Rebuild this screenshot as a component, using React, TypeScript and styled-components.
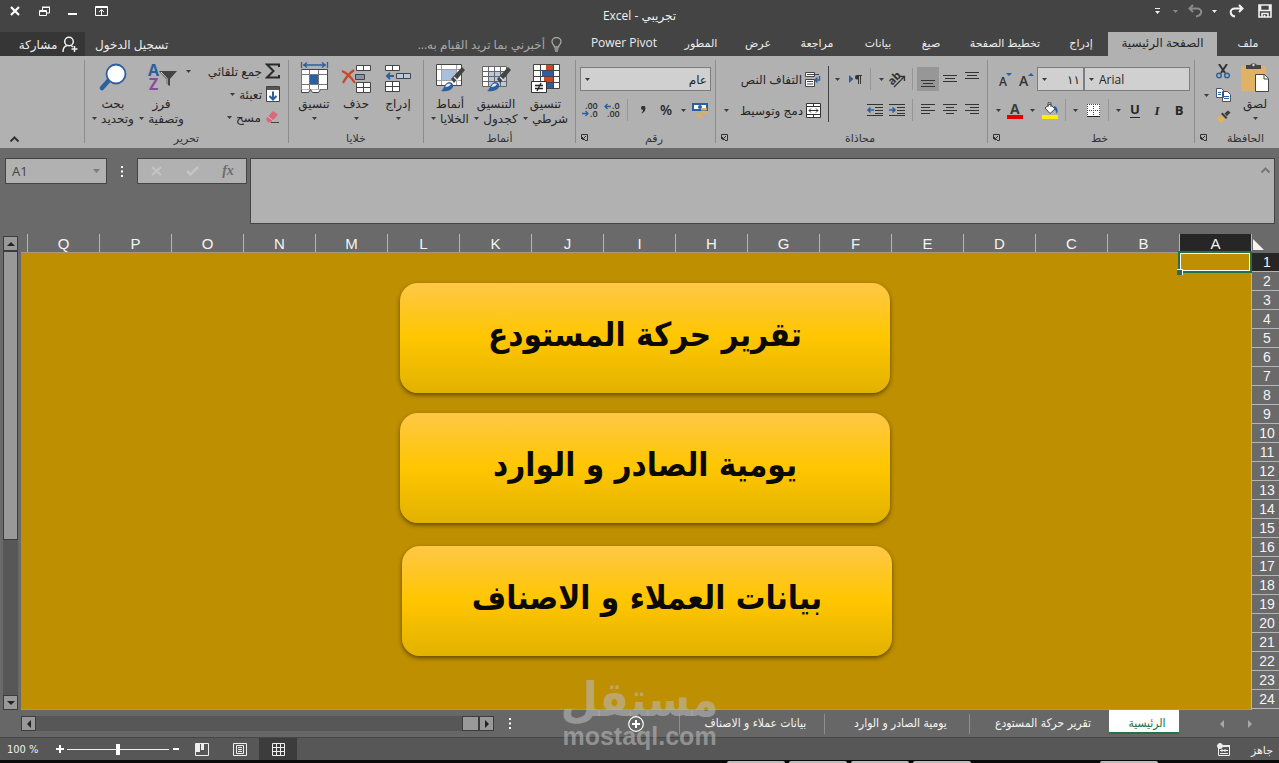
import React from "react";
import styled, { createGlobalStyle, css } from "styled-components";

const ui = `"Open Sans", "DejaVu Sans", sans-serif`;
const condensed = `"DejaVu Sans Condensed", "DejaVu Sans", sans-serif`;
const sheet = `"Liberation Sans", "DejaVu Sans", sans-serif`;

const c = {
  dark: "#444444",
  darker: "#363636",
  ribbon: "#b1b1b1",
  frame: "#6a6a6a",
  status: "#575757",
  ink: "#262626",
  blue: "#2b5f9e",
  gold: "#be8f00",
  green: "#217346",
  field: "#d0d0d0",
};

const GlobalStyle = createGlobalStyle`
  * { box-sizing: border-box; }
  body { margin: 0; background: ${c.frame}; }
  button, input, select, textarea { font: inherit; color: inherit; border: 0; padding: 0; margin: 0; background: none; border-radius: 0; outline: none; }
  svg { display: block; flex: none; direction: ltr; }
`;

const Window = styled.div`
  position: relative;
  display: flex;
  flex-direction: column;
  min-height: 100vh;
  overflow: hidden;
  font: 12px/15px ${ui};
  color: ${c.ink};
`;

/* ---------- title bar and tabs ---------- */

const TitleBar = styled.header`
  display: grid;
  grid-template-columns: 1fr auto 1fr;
  height: 32px;
  background: ${c.dark};
  color: #f0f0f0;
`;
const Title = styled.h1`
  margin: 0;
  font: 400 12px/32px ${ui};
`;
const QuickAccess = styled.div`
  display: flex;
  align-items: center;
  height: 22px;
  padding-right: 2px;
`;
const WindowControls = styled.div`
  display: flex;
  direction: ltr;
  align-items: center;
  height: 22px;
`;
const Slot = styled.button<{ $w?: number; $h?: number; $on?: boolean }>`
  display: flex;
  flex: none;
  align-items: center;
  justify-content: center;
  width: ${(p) => p.$w ?? 22}px;
  height: ${(p) => p.$h ?? 22}px;
  background: ${(p) => (p.$on ? "#979797" : "none")};
`;
const TabRow = styled.nav`
  display: flex;
  height: 24px;
  background: ${c.dark};
  color: #ececec;
`;
const Tab = styled.button<{ $w: number; $active?: boolean }>`
  flex: none;
  width: ${(p) => p.$w}px;
  padding-bottom: 3px;
  font-size: ${(p) => (p.dir === "ltr" || p.$active ? 12 : 11)}px;
  white-space: nowrap;
  ${(p) => p.$active && css`background: ${c.ribbon}; color: ${c.ink};`}
`;
const TellMe = styled.button`
  display: flex;
  align-items: center;
  gap: 6px;
  padding-right: 16px;
  color: #a8a8a8;
`;
const SignIn = styled.button`
  margin-right: auto;
  padding-left: 10px;
`;
const Share = styled.button`
  display: flex;
  align-items: center;
  justify-content: center;
  gap: 5px;
  width: 85px;
  padding-left: 12px;
  background: ${c.darker};
`;

/* ---------- ribbon ---------- */

const Ribbon = styled.section`
  display: flex;
  height: 92px;
  background: ${c.ribbon};
`;
const Group = styled.div<{ $w: number }>`
  display: flex;
  flex: none;
  flex-direction: column;
  width: ${(p) => p.$w}px;
  background: linear-gradient(#8c8c8c, #8c8c8c) left 4px / 1px 83px no-repeat;
  padding-left: 1px;
`;
const GroupBody = styled.div`
  display: flex;
  flex: 1;
  padding: 4px 4px 0;
`;
const GroupFoot = styled.div`
  display: flex;
  align-items: center;
  height: 18px;
  padding-bottom: 3px;
  color: #333;
  font-size: 11px;
`;
const GroupName = styled.span`
  flex: 1;
  text-align: center;
`;
const RibbonEnd = styled.div`
  display: flex;
  flex: 1;
  align-items: flex-end;
  justify-content: flex-end;
  padding: 0 0 0 4px;
`;
const BigButton = styled.button<{ $w: number }>`
  display: flex;
  flex: none;
  flex-direction: column;
  align-items: center;
  width: ${(p) => p.$w}px;
  height: 70px;
  white-space: nowrap;
`;
const BigIcon = styled.span`
  display: flex;
  align-items: center;
  height: 36px;
`;
const Line = styled.span`
  display: flex;
  align-items: center;
  gap: 4px;
  height: 15px;
`;
const Rows = styled.div`
  display: flex;
  flex-direction: column;
  padding-top: 7px;
  gap: 7px;
`;
const SmallStack = styled.div<{ $w?: number }>`
  display: flex;
  flex: none;
  flex-direction: column;
  gap: 1px;
  width: ${(p) => (p.$w ? p.$w + "px" : "auto")};
`;
const EditingStack = styled(SmallStack)`
  margin-right: 4px;
`;
const Row = styled.div`
  display: flex;
  align-items: center;
  height: 24px;
`;
const Small = styled.button<{ $gap?: number }>`
  display: flex;
  align-items: center;
  gap: ${(p) => p.$gap ?? 4}px;
  height: 22px;
  white-space: nowrap;
`;
const Sep = styled.span<{ $w: number }>`
  flex: none;
  width: ${(p) => p.$w}px;
  height: 22px;
  background: linear-gradient(#969696, #969696) center / 1px 100% no-repeat;
`;
const DarkSep = styled.span`
  flex: none;
  width: 1px;
  height: 56px;
  margin-top: 6px;
  background: #444;
`;
const WrapBlock = styled.div`
  display: flex;
  flex: 1;
  flex-direction: column;
  gap: 7px;
  padding: 7px 7px 0 4px;
`;
const WideSmall = styled.button`
  display: flex;
  align-items: center;
  gap: 3px;
  height: 24px;
  white-space: nowrap;
`;
const PushEnd = styled.span`
  margin-right: auto;
`;
const SelectBox = styled.label<{ $w: number }>`
  position: relative;
  display: flex;
  width: ${(p) => p.$w}px;
  height: 24px;
  border: 1px solid #7d7d7d;
  background: ${c.field};
`;
const Picker = styled.select<{ $ltr?: boolean }>`
  width: 100%;
  padding: ${(p) => (p.$ltr ? "0 0 0 14px" : "0 3px 0 14px")};
  appearance: none;
  direction: ${(p) => (p.$ltr ? "ltr" : "rtl")};
`;
const PickerArrow = styled.span`
  position: absolute;
  left: 4px;
  top: 10px;
  pointer-events: none;
`;
const Glyph = styled.span<{ $italic?: boolean; $under?: boolean }>`
  font: ${(p) => (p.$italic ? "italic" : "normal")} 700 13px/15px ${(p) => (p.$italic ? `"Liberation Serif", serif` : ui)};
  border-bottom: ${(p) => (p.$under ? `1px solid ${c.ink}` : "0")};
`;
const Percent = styled.span`
  font: 600 14px/20px ${ui};
`;

/* ---------- formula bar ---------- */

const FormulaArea = styled.section`
  display: flex;
  direction: ltr;
  align-items: flex-start;
  height: 86px;
  padding: 10px 4px 0 5px;
  background: ${c.frame};
`;
const NameBox = styled.div`
  display: flex;
  align-items: center;
  width: 102px;
  height: 26px;
  padding: 0 6px;
  border: 1px solid #444;
  background: ${c.ribbon};
  color: #444;
`;
const NameInput = styled.input`
  flex: 1;
  min-width: 0;
  font-size: 13px;
`;
const DotsWrap = styled.div<{ $w: number }>`
  display: flex;
  align-items: center;
  justify-content: center;
  width: ${(p) => p.$w}px;
  height: 26px;
`;
const FxBox = styled.div`
  display: flex;
  align-items: center;
  width: 110px;
  height: 26px;
  border: 1px solid #444;
  background: ${c.ribbon};
`;
const Fx = styled.span`
  font: italic 700 14px/20px "Liberation Serif", serif;
  color: #6d6d6d;
`;
const FormulaBox = styled.div`
  display: flex;
  flex: 1;
  align-items: flex-start;
  height: 66px;
  margin-left: 3px;
  border: 1px solid #444;
  background: ${c.ribbon};
`;
const FormulaInput = styled.textarea`
  flex: 1;
  height: 100%;
  resize: none;
`;

/* ---------- worksheet ---------- */

const Sheet = styled.main`
  display: flex;
  flex: 1;
  background: ${c.frame};
  font-family: ${sheet};
`;
const RowHeads = styled.div`
  flex: none;
  width: 28px;
  border-left: 1px solid #b5b5b5;
`;
const Corner = styled.div`
  display: flex;
  align-items: center;
  justify-content: flex-end;
  height: 19px;
  padding: 0 3px 0 0;
`;
const RowHead = styled.div<{ $active?: boolean }>`
  height: 19px;
  padding-left: 3px;
  border-bottom: 1px solid #b5b5b5;
  background: ${(p) => (p.$active ? "#262626" : "none")};
  color: #f4f4f4;
  font-size: 14px;
  line-height: 19px;
  direction: ltr;
  text-align: center;
`;
const Grid = styled.div`
  display: flex;
  flex: 1;
  flex-direction: column;
  min-width: 0;
`;
const ColHeads = styled.div`
  display: flex;
  height: 19px;
  overflow: hidden;
  border-bottom: 1px solid #a19a80;
`;
const ColHead = styled.div<{ $active?: boolean }>`
  flex: none;
  width: 72px;
  border-left: 1px solid #b5b5b5;
  background: ${(p) => (p.$active ? "#262626" : "none")};
  color: #f4f4f4;
  font-size: 15px;
  line-height: 19px;
  text-align: center;
`;
const Canvas = styled.div`
  position: relative;
  flex: 1;
  border-bottom: 1px solid #a19a80;
  background: ${c.gold};
`;
const SelectedCell = styled.div`
  position: absolute;
  top: -2px;
  right: -1px;
  width: 74px;
  height: 22px;
  border: 2px solid ${c.green};
  box-shadow: inset 0 0 0 1px #fff;
`;
const FillHandle = styled.span`
  position: absolute;
  left: -3px;
  bottom: -4px;
  width: 6px;
  height: 6px;
  border: 1px solid #fff;
  border-width: 1px 1px 0 0;
  background: ${c.green};
`;
const Shape = styled.button<{ $top: number; $right: number }>`
  position: absolute;
  top: ${(p) => p.$top}px;
  right: ${(p) => p.$right}px;
  width: 490px;
  height: 110px;
  padding-bottom: 6px;
  border-radius: 18px;
  background: linear-gradient(#ffc746, #ffc600 50%, #e2b200);
  box-shadow: 0 2px 4px rgba(60, 40, 0, 0.7);
  color: #0c0a06;
  font: 700 33px/40px ${condensed};
`;
const VScroll = styled.div`
  display: flex;
  flex: none;
  flex-direction: column;
  width: 21px;
  padding: 2px 3px 0;
`;
const ScrollButton = styled.button`
  display: flex;
  flex: none;
  align-items: center;
  justify-content: center;
  width: 15px;
  height: 15px;
  border: 1px solid #3c3c3c;
  background: #999;
`;
const VTrack = styled.div`
  flex: 1;
  background: #575757;
`;
const VThumb = styled.div`
  height: 65%;
  border: 1px solid #3c3c3c;
  background: #999;
`;

/* ---------- sheet tabs and status bar ---------- */

const SheetBar = styled.nav`
  display: flex;
  height: 28px;
  background: #676767;
  border-bottom: 1px solid #464646;
`;
const SheetNav = styled.div`
  display: flex;
  align-items: center;
  justify-content: center;
  width: 100px;
  padding-left: 14px;
  height: 27px;
`;
const SheetTab = styled.button<{ $w: number; $active?: boolean }>`
  flex: none;
  width: ${(p) => p.$w}px;
  height: 27px;
  padding-left: 8px;
  color: #f4f4f4;
  font: 12px/15px ${condensed};
  white-space: nowrap;
  background: linear-gradient(#8f8f8f, #8f8f8f) left 4px / 1px 20px no-repeat;
  ${(p) =>
    p.$active &&
    css`
      height: 24px;
      padding: 4px 0 0 6px;
      background: #fff;
      color: ${c.green};
      border-bottom: 2px solid ${c.green};
    `}
`;
const Spacer = styled.span`
  flex: 1;
`;
const HScroll = styled.div`
  display: flex;
  direction: ltr;
  align-items: center;
  width: 37%;
  height: 27px;
`;
const HTrack = styled.div`
  display: flex;
  flex: 1;
  justify-content: flex-end;
  height: 15px;
  background: #575757;
`;
const HThumb = styled.div`
  width: 17px;
  border: 1px solid #3c3c3c;
  background: #999;
`;
const SheetBarEnd = styled.div`
  flex: none;
  width: 21px;
`;
const StatusBar = styled.footer`
  display: flex;
  align-items: center;
  height: 22px;
  padding-right: 6px;
  background: ${c.status};
  color: #f0f0f0;
  font-size: 11px;
`;
const StatusEnd = styled.div`
  display: flex;
  direction: ltr;
  align-items: center;
  margin-right: auto;
  padding-left: 7px;
`;
const ZoomText = styled.span`
  width: 46px;
  font-family: ${condensed};
`;
const ViewSlot = styled.button<{ $on?: boolean }>`
  display: flex;
  align-items: center;
  justify-content: center;
  width: 38px;
  height: 22px;
  background: ${(p) => (p.$on ? "#3c3c3c" : "none")};
`;
const ZoomSlider = styled.input`
  width: 102px;
  height: 14px;
  appearance: none;
  background: linear-gradient(#f0f0f0, #f0f0f0) center / 100% 1px no-repeat;
  &::-webkit-slider-thumb {
    appearance: none;
    width: 4px;
    height: 11px;
    background: #fff;
  }
`;
const TaskStrip = styled.div`
  display: flex;
  height: 3px;
  padding-top: 1px;
  background: #0a0a0a;
`;
const TaskItem = styled.span<{ $gap: number }>`
  width: 58px;
  margin-right: ${(p) => p.$gap}px;
  border-radius: 2px 2px 0 0;
  background: #bdbdbd;
`;
const Watermark = styled.div`
  position: absolute;
  bottom: 14px;
  left: 50%;
  display: flex;
  flex-direction: column;
  align-items: center;
  width: 160px;
  margin-left: -80px;
  color: rgba(185, 185, 185, 0.6);
  pointer-events: none;
`;
const MarkName = styled.span`
  font: 700 48px/48px ${condensed};
`;
const MarkUrl = styled.span`
  font: 700 25px/26px "Liberation Sans", sans-serif;
`;

/* ---------- icons ---------- */

const Arrow = ({ color = "#3c3c3c" }: { color?: string }) => (
  <svg width="5" height="3" viewBox="0 0 5 3"><path d="M0 0h5L2.500 3z" fill={color} /></svg>
);
const Dots = () => (
  <svg width="2" height="11" viewBox="0 0 2 11" fill="#fff"><path d="M0 0h2v2H0zM0 4.500h2v2H0zM0 9h2v2H0z" /></svg>
);
const Launcher = () => (
  <svg width="7" height="7" viewBox="0 0 7 7" fill="none" stroke="#333"><path d="M.5 5V.5H6.500V6.500H4M5 2L2 5M1.500 3v2.500H4" /></svg>
);
const Lines = ({ rows }: { rows: [number, number, number][] }) => (
  <svg width="16" height="20" viewBox="0 0 16 20" stroke="#333">
    {rows.map(([y, a, b]) => <path key={y} d={`M${a} ${y}.5H${b}`} />)}
  </svg>
);
const Indent = ({ left }: { left?: boolean }) => (
  <svg width="18" height="14" viewBox="0 0 18 14" fill="none" stroke="#333">
    <path d="M1 1.500h16M9 4.500h8M9 7.500h8M9 10.500h8M1 12.500h16" />
    <path d={left ? "M8 7H2M4.500 4.500L2 7l2.500 2.500" : "M1 7h6M4.500 4.500L7 7 4.500 9.500"} stroke={c.blue} strokeWidth="1.600" />
  </svg>
);
const Save = () => (
  <svg width="14" height="14" viewBox="0 0 14 14" fill="none" stroke="#f0f0f0" strokeWidth="1.600">
    <path d="M1 1h12v12H1zM2.500 1v5.500h9V1M4 13V9.500h6v3.500" /><path d="M6.500 11v2" />
  </svg>
);
const Turn = ({ undo }: { undo?: boolean }) => (
  <svg width="15" height="14" viewBox="0 0 15 14" fill="none" stroke={undo ? "#8a8a8a" : "#f4f4f4"} strokeWidth="2">
    <path d={undo ? "M5 1L1.500 4.500 5 8M2 4.500h7c6 0 5.500 7-1 8" : "M10 1l3.500 3.500L10 8M13 4.500H6c-6 0-5.500 7 0 8"} />
  </svg>
);
const Customize = () => (
  <svg width="6" height="6" viewBox="0 0 6 6" fill="#eee"><path d="M0 0h5v1H0zM0 3h5L2.500 6z" /></svg>
);
const Close = () => (
  <svg width="10" height="10" viewBox="0 0 10 10" stroke="#fff" strokeWidth="2.200"><path d="M1 1l8 8M9 1L1 9" /></svg>
);
const Restore = () => (
  <svg width="11" height="11" viewBox="0 0 11 11" fill="none" stroke="#fff"><path d="M.5 4.500h7v5h-7zM.5 5.500h7M3.500 4V1.500h7v5.500H8M3 1h8" /></svg>
);
const Minimize = () => (
  <svg width="9" height="11" viewBox="0 0 9 11" fill="#fff"><path d="M0 7h9v2H0z" /></svg>
);
const RibbonOptions = () => (
  <svg width="13" height="10" viewBox="0 0 13 10" fill="none" stroke="#fff"><path d="M.5.5h12v9H.5zM.5 1.500h12M6.500 9V4M4 6l2.500-2.500L9 6" /></svg>
);
const Bulb = () => (
  <svg width="11" height="15" viewBox="0 0 11 15" fill="none" stroke="#a8a8a8" strokeWidth="1.300"><path d="M3.500 10c0-2-2.500-2.500-2.500-5.500a4.500 4 0 0 1 9 0C10 7.500 7.500 8 7.500 10zM3.500 12h4M4 14h3" /></svg>
);
const Person = () => (
  <svg width="16" height="17" viewBox="0 0 16 17" fill="none" stroke="#f0f0f0" strokeWidth="1.500">
    <circle cx="7" cy="5.500" r="4.300" /><path d="M1 16c0-4 2-6 4-6.500M9 9.500l2 1.500M12.500 10v6M9.500 13h6" />
  </svg>
);
const Paste = () => (
  <svg width="28" height="32" viewBox="0 0 28 32">
    <path d="M0 4h25v25H0z" fill="#dfb266" /><path d="M5 7V3h4a4 3.500 0 0 1 7 0h4v4z" fill="#444" /><circle cx="12.500" cy="3" r="1.200" fill="#ddd" />
    <path d="M14.500 12.500h9l4 4v13h-13z" fill="#fff" stroke="#444" /><path d="M23 12.500v4.500h4.500" fill="none" stroke="#444" />
  </svg>
);
const Cut = () => (
  <svg width="14" height="15" viewBox="0 0 14 15" fill="none"><path d="M3 0l6 9M11 0L5 9" stroke="#333" strokeWidth="2" /><g stroke={c.blue} strokeWidth="1.400"><circle cx="3" cy="11.500" r="2.300" /><circle cx="11" cy="11.500" r="2.300" /></g></svg>
);
const Copy = () => (
  <svg width="15" height="14" viewBox="0 0 15 14" fill="#fff" stroke="#44546a"><path d="M.5.5h5l2 2v7h-7zM6.500 3.500h5l3 3v7h-8z" /><path d="M2 4.500h3M2 6.500h3M8 8.500h5M8 10.500h5" stroke={c.blue} /></svg>
);
const Painter = () => (
  <svg width="16" height="14" viewBox="0 0 16 14"><path d="M1 8l5-3 4 4-4 4.500z" fill="#dfb266" /><path d="M6 4l1.500-1.500 5 5L11 9zM9.500 3.500L13 .5l2.500 2L12 6z" fill="#3c3c3c" /></svg>
);
const GrowA = ({ down }: { down?: boolean }) => (
  <svg width="17" height="16" viewBox="0 0 17 16">
    <text x={down ? 2 : 1} y="15" fontFamily="Open Sans" fontWeight="600" fontSize={down ? 12 : 14} fill="#333">A</text>
    <path d={down ? "M9 2h6l-3 3z" : "M10 5h6l-3-3z"} fill={c.blue} />
  </svg>
);
const Borders = () => (
  <svg width="13" height="13" viewBox="0 0 13 13"><path d="M0 0h13v13H0z" fill="#fff" /><path d="M.5 0v12M6.500 0v12M12.500 0v12M0 .5h13M0 6.500h13" stroke="#444" strokeDasharray="1 1" /><path d="M0 12.500h13" stroke="#222" /></svg>
);
const Fill = () => (
  <svg width="17" height="17" viewBox="0 0 17 17"><path d="M3 6l5-4 5 5-5 4.500z" fill="#fff" stroke="#444" /><path d="M6 5V1.500a1.500 1.500 0 0 1 3 0V5" fill="none" stroke="#444" /><path d="M12 4c4 1 4 5 3 8-1-1-1-4-3-5z" fill={c.blue} /><path d="M0 13h16v4H0z" fill="#ffee00" /></svg>
);
const FontColor = () => (
  <svg width="16" height="17" viewBox="0 0 16 17"><text x="3" y="12" fontFamily="Open Sans" fontWeight="700" fontSize="14" fill="#3c3c3c">A</text><path d="M0 13h16v4H0z" fill="#e00000" /></svg>
);
const Orient = () => (
  <svg width="18" height="17" viewBox="0 0 18 17"><text x="1" y="11" transform="rotate(-45 7 9)" fontFamily="Open Sans" fontWeight="700" fontSize="11" fill="#333">ab</text><path d="M6 16L16 6M12 5.500h4.500V10" fill="none" stroke="#333" strokeWidth="1.300" /></svg>
);
const Paragraph = () => (
  <svg width="13" height="10" viewBox="0 0 13 10"><path d="M0 1l4.500 4L0 9z" fill={c.blue} /><path d="M9 1H8a2 2.200 0 0 0 0 4.500h1V10h1V2h1v8h1V2h1V1z" fill="#333" /></svg>
);
const WrapIcon = () => (
  <svg width="16" height="15" viewBox="0 0 16 15" fill="none"><path d="M.5.5h9v4h-9zM.5 7.500h9v7h-9z" fill="#fff" stroke="#444" /><path d="M2 2.500h12M2 9.500h6M2 12h6" stroke="#444" /><path d="M14.500 4v4h-4M12.500 5.500L10 8l2.500 2.500" stroke={c.blue} strokeWidth="1.400" /></svg>
);
const MergeIcon = () => (
  <svg width="15" height="15" viewBox="0 0 15 15" fill="none" stroke="#333"><path d="M.5.5h14v14H.5z" fill="#fff" /><path d="M.5 3.500h14M.5 11.500h14M7.500 0v3.500M7.500 11.500V15M3 7.500h9M5 5.500l-2 2 2 2M10 5.500l2 2-2 2" /></svg>
);
const Currency = () => (
  <svg width="17" height="17" viewBox="0 0 17 17"><path d="M0 1h16v8H0z" fill={c.blue} /><path d="M2 3h12v4H2z" fill="#fff" /><circle cx="8" cy="5" r="2" fill={c.blue} /><g fill="#dfae62"><rect x="9" y="6" width="6" height="2.500" rx="1" /><rect x="10" y="9" width="6" height="2.500" rx="1" /><rect x="4" y="12" width="6" height="2" rx="1" /><rect x="5" y="14.500" width="6" height="2" rx="1" /></g></svg>
);
const Decimal = ({ less }: { less?: boolean }) => (
  <svg width="17" height="16" viewBox="0 0 17 16" fontFamily="Open Sans" fontSize="9" fontWeight="600" fill="#2c2c2c">
    <text x={less ? 3 : 8} y="7">{less ? ".00" : ".0"}</text><text x={less ? 8 : 3} y="15">{less ? ".0" : ".00"}</text>
    <path d={less ? "M0 11.500h6M3.500 9L6 11.500 3.500 14" : "M7 4.500H1M3.500 2L1 4.500 3.500 7"} fill="none" stroke={c.blue} strokeWidth="1.300" />
  </svg>
);
const Comma = () => (
  <svg width="5" height="8" viewBox="0 0 5 8"><path d="M0 2a2 2 0 0 1 4.500 0C4.500 5 3 6.500 0 7.500 1.500 6 2 5 2 4 1 4 0 3 0 2z" fill="#333" /></svg>
);
const Conditional = () => (
  <svg width="31" height="31" viewBox="0 0 31 31"><path d="M3.500 1.500h26v24h-26z" fill="#fff" /><path d="M16 2h7v5h-7zM14 14h9v5h-9z" fill="#c8472c" /><path d="M12 8h11v5H12zM16 20h7v5h-7z" fill={c.blue} /><path d="M3.500 1.500h26v24h-26zM3.500 7.500h26M3.500 13.500h26M3.500 19.500h26M10.500 1.500v24M23.500 1.500v24" fill="none" stroke="#444" /><path d="M1.500 18.500h15v11h-15z" fill="#fff" stroke="#333" /><path d="M5 22.500h8M5 25.500h8M11 20l-4 8" stroke="#222" strokeWidth="1.300" /></svg>
);
const Brush = () => (
  <><path d="M16 16L27 4l3 3L19 20z" fill="#444" /><path d="M19 14l4 4" stroke="#ddd" strokeWidth="1.500" /><path d="M6 28c3-1 3-8 8-9 3 0 5 3 4 5-2 4-8 5-12 4z" fill={c.blue} /><path d="M10 24c2-4 4-4 6-3-1 2-3 3-6 3z" fill="#eef" /></>
);
const TableFormat = () => (
  <svg width="30" height="30" viewBox="0 0 30 30"><path d="M1.500 3.500h24v20h-24z" fill="#fff" /><path d="M8 9h17v14H8z" fill="#b5c9e0" /><path d="M1.500 3.500h24v20h-24zM1.500 8.500h24M1.500 13.500h24M1.500 18.500h24M7.500 3.500v20M13.500 3.500v20M19.500 3.500v20" fill="none" stroke="#666" /><Brush /></svg>
);
const CellStyles = () => (
  <svg width="30" height="30" viewBox="0 0 30 30"><path d="M1.500 1.500h25v21h-25z" fill="#fff" /><path d="M6.500 6.500h15v11h-15z" fill="#a9c0dc" /><path d="M1.500 6.500h25M1.500 17.500h25M6.500 1.500v21M21.500 1.500v21" fill="none" stroke="#a0a0a0" /><path d="M1.500 1.500h25v21h-25z" fill="none" stroke="#444" /><Brush /></svg>
);
const Insert = () => (
  <svg width="27" height="29" viewBox="0 0 27 29"><g fill="#fff" stroke="#444"><path d="M.5 1.500h14v5H.5zM7.500 1.500v5M.5 17.500h14v10H.5zM.5 22.500h14M7.500 17.500v10" /><path d="M11.500 9.500h14v5h-14zM18.500 9.500v5" fill="#b5c9e0" /></g><path d="M9 12H2M5 9l-3 3 3 3" fill="none" stroke={c.blue} strokeWidth="2" /></svg>
);
const Delete = () => (
  <svg width="30" height="29" viewBox="0 0 30 29"><g fill="#fff" stroke="#444"><path d="M15.500 1.500h14v5h-14zM22.500 1.500v5M15.500 18.500h14v10h-14zM15.500 23.500h14M22.500 18.500v10" /><path d="M14.500 10.500h9v5h-9z" fill="#8794a5" /></g><path d="M1 7c5 2 9 6 13 12M13 6C9 9 5 13 2 19" fill="none" stroke="#c8472c" strokeWidth="2.200" /></svg>
);
const FormatCells = () => (
  <svg width="29" height="33" viewBox="0 0 29 33"><path d="M1.500 0v6M27.500 0v6M3 3h23M7 .5L4 3l3 2.500M22 .5L25 3l-3 2.500" fill="none" stroke={c.blue} strokeWidth="1.300" /><path d="M1.500 7.500h26v20h-26z" fill="#fff" /><path d="M1.500 7.500h26v20h-26zM1.500 12.500h26M1.500 22.500h26M9.500 7.500v20M18.500 7.500v20" fill="none" stroke="#777" /><path d="M10 13h8v9h-8z" fill={c.blue} /><path d="M1.500 7.500h26v20" fill="none" stroke="#444" /><path d="M1.500 27.500v3h7l2-3 2 3h6l2-3" fill="#fff" stroke="#444" /></svg>
);
const Sigma = () => (
  <svg width="15" height="16" viewBox="0 0 15 16" fill="none" stroke="#2a2a2a" strokeWidth="2"><path d="M14 4V1.500H2L8.500 8 2 14.500h12V12" /></svg>
);
const FillDown = () => (
  <svg width="14" height="16" viewBox="0 0 14 16"><path d="M.5.5h13v15H.5z" fill="#fff" stroke="#444" /><path d="M1 1h12v3H1z" fill="#555" /><path d="M7 5.500v8M3.500 10L7 13.500l3.500-3.500" fill="none" stroke={c.blue} strokeWidth="2" /></svg>
);
const Eraser = () => (
  <svg width="15" height="14" viewBox="0 0 15 14"><path d="M1 9l7-8 5 3.500-7 8H3z" fill="#d9697c" /><path d="M3 6.500L8.500 11" stroke="#f0b8c0" /><path d="M6 12.500h8" stroke="#444" /></svg>
);
const Sort = () => (
  <svg width="30" height="32" viewBox="0 0 30 32" fontFamily="Open Sans" fontWeight="700" fontSize="16"><text x="1" y="14" fill={c.blue}>A</text><text x="2" y="28" fill="#8a4a9c">Z</text><path d="M12 9h18l-7 8v7l-4-2v-5z" fill="#444" /><path d="M14 10l6 6.500V23" fill="none" stroke="#ddd" /></svg>
);
const Find = () => (
  <svg width="28" height="32" viewBox="0 0 28 32"><path d="M11 17L3 26" stroke={c.blue} strokeWidth="4.500" strokeLinecap="round" /><circle cx="17" cy="12" r="9.500" fill="#fff" stroke={c.blue} strokeWidth="1.800" /></svg>
);
const ChevronUp = ({ color = "#333" }: { color?: string }) => (
  <svg width="9" height="6" viewBox="0 0 9 6" fill="none" stroke={color} strokeWidth="2"><path d="M.5 5.500l4-4 4 4" /></svg>
);
const Tri = ({ d, color = "#222" }: { d: string; color?: string }) => (
  <svg width="8" height="8" viewBox="0 0 8 8"><path d={d} fill={color} /></svg>
);
const left = "M6 0v8L2 4z";
const right = "M2 0v8l4-4z";

/* ---------- data ---------- */

const ribbonTabs: [string, number][] = [
  ["إدراج", 54], ["تخطيط الصفحة", 98], ["صيغ", 50], ["بيانات", 56], ["مراجعة", 66], ["عرض", 52], ["المطور", 62],
];
const columns = "ABCDEFGHIJKLMNOPQ".split("");
const rows = Array.from({ length: 24 }, (_, i) => i + 1);
const shapes: [string, number, number][] = [
  ["تقرير حركة المستودع", 30, 361],
  ["يومية الصادر و الوارد", 160, 361],
  ["بيانات العملاء و الاصناف", 293, 359],
];
const taskGaps = [121, 129, 4, 4, 4];

const Big = ({ w, icon, a, b, arrow = true }: { w: number; icon: React.ReactNode; a: string; b?: string; arrow?: boolean }) => (
  <BigButton $w={w}>
    <BigIcon>{icon}</BigIcon>
    <Line>{a}</Line>
    <Line>{b}{arrow && <Arrow />}</Line>
  </BigButton>
);
const Foot = ({ name, launcher }: { name: string; launcher?: boolean }) => (
  <GroupFoot>
    <GroupName>{name}</GroupName>
    {launcher && <Slot $w={17} $h={15} aria-label={name}><Launcher /></Slot>}
  </GroupFoot>
);

export default function App() {
  return (
    <Window dir="rtl" lang="ar">
      <GlobalStyle />
      <TitleBar>
        <QuickAccess>
          <Slot $w={24} aria-label="حفظ"><Save /></Slot>
          <Slot $w={34} aria-label="إعادة"><Turn /></Slot>
          <Slot $w={10} aria-label="خيارات الإعادة"><Arrow color="#eee" /></Slot>
          <Slot $w={28} aria-label="تراجع"><Turn undo /></Slot>
          <Slot $w={12} aria-label="خيارات التراجع"><Arrow color="#8a8a8a" /></Slot>
          <Slot $w={22} aria-label="تخصيص"><Customize /></Slot>
        </QuickAccess>
        <Title>تجريبي - Excel</Title>
        <WindowControls>
          <Slot $w={30} aria-label="إغلاق"><Close /></Slot>
          <Slot $w={28} aria-label="استعادة"><Restore /></Slot>
          <Slot $w={28} aria-label="تصغير"><Minimize /></Slot>
          <Slot $w={31} aria-label="خيارات الشريط"><RibbonOptions /></Slot>
        </WindowControls>
      </TitleBar>
      <TabRow>
        <Tab $w={62}>ملف</Tab>
        <Tab $w={109} $active>الصفحة الرئيسية</Tab>
        {ribbonTabs.map(([t, w]) => <Tab key={t} $w={w}>{t}</Tab>)}
        <Tab $w={92} dir="ltr">Power Pivot</Tab>
        <TellMe><Bulb />أخبرني بما تريد القيام به...</TellMe>
        <SignIn>تسجيل الدخول</SignIn>
        <Share><Person />مشاركة</Share>
      </TabRow>

      <Ribbon>
        <Group $w={85}>
          <GroupBody>
            <Big w={40} icon={<Paste />} a="لصق" />
            <SmallStack>
              <Slot $w={24} $h={22} aria-label="قص"><Cut /></Slot>
              <Row>
                <Slot $w={24} aria-label="نسخ"><Copy /></Slot>
                <Slot $w={10} aria-label="خيارات النسخ"><Arrow /></Slot>
              </Row>
              <Slot $w={24} $h={18} aria-label="نسخ التنسيق"><Painter /></Slot>
            </SmallStack>
          </GroupBody>
          <Foot name="الحافظة" launcher />
        </Group>

        <Group $w={207}>
          <GroupBody>
            <Rows>
              <Row>
                <SelectBox $w={106}><Picker $ltr aria-label="نوع الخط"><option>Arial</option></Picker><PickerArrow><Arrow /></PickerArrow></SelectBox>
                <SelectBox $w={47}><Picker aria-label="حجم الخط"><option>١١</option></Picker><PickerArrow><Arrow /></PickerArrow></SelectBox>
                <Slot aria-label="تكبير الخط"><GrowA /></Slot>
                <Slot $w={20} aria-label="تصغير الخط"><GrowA down /></Slot>
              </Row>
              <Row>
                <Slot aria-label="غامق"><Glyph>B</Glyph></Slot>
                <Slot aria-label="مائل"><Glyph $italic>I</Glyph></Slot>
                <Slot aria-label="تسطير"><Glyph $under>U</Glyph></Slot>
                <Slot $w={12} aria-label="خيارات التسطير"><Arrow /></Slot>
                <Sep $w={7} />
                <Slot $w={24} aria-label="حدود"><Borders /></Slot>
                <Slot $w={12} aria-label="خيارات الحدود"><Arrow /></Slot>
                <Sep $w={7} />
                <Slot $w={24} aria-label="لون التعبئة"><Fill /></Slot>
                <Slot $w={12} aria-label="خيارات التعبئة"><Arrow /></Slot>
                <Slot aria-label="لون الخط"><FontColor /></Slot>
                <Slot $w={12} aria-label="خيارات لون الخط"><Arrow /></Slot>
              </Row>
            </Rows>
          </GroupBody>
          <Foot name="خط" launcher />
        </Group>

        <Group $w={272}>
          <GroupBody>
            <Rows>
              <Row>
                <Slot $h={24} aria-label="محاذاة للأعلى"><Lines rows={[[3, 1, 15], [6, 3, 13], [9, 1, 15]]} /></Slot>
                <Slot $h={24} aria-label="محاذاة للوسط"><Lines rows={[[6, 1, 15], [9, 3, 13], [12, 1, 15]]} /></Slot>
                <Slot $h={24} $on aria-label="محاذاة للأسفل"><Lines rows={[[11, 1, 15], [14, 3, 13], [17, 1, 15]]} /></Slot>
                <Sep $w={9} />
                <Slot aria-label="الاتجاه"><Orient /></Slot>
                <Slot $w={10} aria-label="خيارات الاتجاه"><Arrow /></Slot>
                <Sep $w={11} />
                <Slot $w={20} aria-label="اتجاه النص"><Paragraph /></Slot>
                <Slot $w={16} aria-label="خيارات اتجاه النص"><Arrow /></Slot>
              </Row>
              <Row>
                <Slot aria-label="يمين"><Lines rows={[[4, 1, 15], [7, 6, 15], [10, 1, 15], [13, 6, 15]]} /></Slot>
                <Slot aria-label="توسيط"><Lines rows={[[4, 1, 15], [7, 4, 12], [10, 1, 15], [13, 4, 12]]} /></Slot>
                <Slot aria-label="يسار"><Lines rows={[[4, 1, 15], [7, 1, 10], [10, 1, 15], [13, 1, 10]]} /></Slot>
                <Sep $w={9} />
                <Slot aria-label="إنقاص المسافة"><Indent /></Slot>
                <Slot aria-label="زيادة المسافة"><Indent left /></Slot>
              </Row>
            </Rows>
            <DarkSep />
            <WrapBlock>
              <WideSmall><WrapIcon />التفاف النص</WideSmall>
              <WideSmall><MergeIcon />دمج وتوسيط<PushEnd><Arrow /></PushEnd></WideSmall>
            </WrapBlock>
          </GroupBody>
          <Foot name="محاذاة" launcher />
        </Group>

        <Group $w={140}>
          <GroupBody>
            <Rows>
              <SelectBox $w={131}><Picker aria-label="تنسيق الأرقام"><option>عام</option></Picker><PickerArrow><Arrow /></PickerArrow></SelectBox>
              <Row>
                <Slot aria-label="عملة"><Currency /></Slot>
                <Slot $w={12} aria-label="خيارات العملة"><Arrow /></Slot>
                <Slot><Percent>%</Percent></Slot>
                <Slot $w={24} aria-label="فاصلة"><Comma /></Slot>
                <Sep $w={7} />
                <Slot $w={24} aria-label="زيادة المنازل"><Decimal /></Slot>
                <Slot $w={20} aria-label="إنقاص المنازل"><Decimal less /></Slot>
              </Row>
            </Rows>
          </GroupBody>
          <Foot name="رقم" launcher />
        </Group>

        <Group $w={152}>
          <GroupBody>
            <Big w={51} icon={<Conditional />} a="تنسيق" b="شرطي" />
            <Big w={48} icon={<TableFormat />} a="التنسيق" b="كجدول" />
            <Big w={44} icon={<CellStyles />} a="أنماط" b="الخلايا" />
          </GroupBody>
          <Foot name="أنماط" />
        </Group>

        <Group $w={135}>
          <GroupBody>
            <Big w={42} icon={<Insert />} a="إدراج" />
            <Big w={42} icon={<Delete />} a="حذف" />
            <Big w={42} icon={<FormatCells />} a="تنسيق" />
          </GroupBody>
          <Foot name="خلايا" />
        </Group>

        <Group $w={204}>
          <GroupBody>
            <EditingStack $w={94}>
              <Small $gap={3}><Sigma />جمع تلقائي<PushEnd><Arrow /></PushEnd></Small>
              <Small><FillDown />تعبئة<Arrow /></Small>
              <Small><Eraser />مسح<Arrow /></Small>
            </EditingStack>
            <Big w={49} icon={<Sort />} a="فرز" b="وتصفية" />
            <Big w={48} icon={<Find />} a="بحث" b="وتحديد" />
          </GroupBody>
          <Foot name="تحرير" />
        </Group>
        <RibbonEnd><Slot $w={20} $h={18} aria-label="طي الشريط"><ChevronUp /></Slot></RibbonEnd>
      </Ribbon>

      <FormulaArea>
        <NameBox><NameInput aria-label="مربع الاسم" defaultValue="A1" /><svg width="7" height="4" viewBox="0 0 7 4"><path d="M0 0h7L3.500 4z" fill="#7c7c7c" /></svg></NameBox>
        <DotsWrap $w={30}><Dots /></DotsWrap>
        <FxBox>
          <Slot $w={36} aria-label="إلغاء"><svg width="11" height="10" viewBox="0 0 11 10" stroke="#c4c4c4" strokeWidth="2"><path d="M1 1l9 8M10 1L1 9" /></svg></Slot>
          <Slot $w={36} aria-label="إدخال"><svg width="13" height="10" viewBox="0 0 13 10" fill="none" stroke="#c4c4c4" strokeWidth="2.500"><path d="M1 5l3.500 3.500L12 1" /></svg></Slot>
          <Slot $w={36}><Fx>fx</Fx></Slot>
        </FxBox>
        <FormulaBox>
          <FormulaInput aria-label="شريط الصيغة" />
          <Slot $w={18} aria-label="طي"><ChevronUp color="#777" /></Slot>
        </FormulaBox>
      </FormulaArea>

      <Sheet>
        <RowHeads>
          <Corner><svg width="23" height="12" viewBox="0 0 23 12"><path d="M1 1v11h11z" fill="#f4f4f4" /></svg></Corner>
          {rows.map((r) => <RowHead key={r} $active={r === 1}>{r}</RowHead>)}
        </RowHeads>
        <Grid>
          <ColHeads>{columns.map((k) => <ColHead key={k} $active={k === "A"}>{k}</ColHead>)}</ColHeads>
          <Canvas>
            <SelectedCell><FillHandle /></SelectedCell>
            {shapes.map(([t, top, r]) => <Shape key={t} $top={top} $right={r}>{t}</Shape>)}
          </Canvas>
        </Grid>
        <VScroll>
          <ScrollButton aria-label="أعلى"><Tri d="M0 6h8L4 2z" /></ScrollButton>
          <VTrack><VThumb /></VTrack>
          <ScrollButton aria-label="أسفل"><Tri d="M0 2h8L4 6z" /></ScrollButton>
        </VScroll>
      </Sheet>

      <SheetBar>
        <SheetNav>
          <Slot $w={28} aria-label="السابق"><Tri d={right} color="#a8a8a8" /></Slot>
          <Slot $w={28} aria-label="التالي"><Tri d={left} color="#a8a8a8" /></Slot>
        </SheetNav>
        <SheetTab $w={70} $active>الرئيسية</SheetTab>
        <SheetTab $w={140}>تقرير حركة المستودع</SheetTab>
        <SheetTab $w={145}>يومية الصادر و الوارد</SheetTab>
        <SheetTab $w={145}>بيانات عملاء و الاصناف</SheetTab>
        <Slot $w={86} $h={27} aria-label="ورقة جديدة">
          <svg width="16" height="16" viewBox="0 0 16 16" fill="none" stroke="#fff"><circle cx="8" cy="8" r="7.300" strokeWidth="1.200" /><path d="M8 4v8M4 8h8" strokeWidth="2" /></svg>
        </Slot>
        <Spacer />
        <DotsWrap $w={32}><Dots /></DotsWrap>
        <HScroll>
          <ScrollButton aria-label="يسار"><Tri d={left} /></ScrollButton>
          <HTrack><HThumb /></HTrack>
          <ScrollButton aria-label="يمين"><Tri d={right} /></ScrollButton>
        </HScroll>
        <SheetBarEnd />
      </SheetBar>

      <StatusBar>
        <span>جاهز</span>
        <Slot $w={54} aria-label="تسجيل ماكرو">
          <svg width="13" height="13" viewBox="0 0 13 13" fill="none" stroke="#eee"><path d="M1.500 5v7.500h11v-10H6M3 7.500h8M3 10.500h8" /><path d="M6 3h7" strokeWidth="2" /><path d="M5 6v6M8 6v6" strokeDasharray="1 1" /><circle cx="3" cy="3" r="2.500" fill="#eee" /></svg>
        </Slot>
        <StatusEnd>
          <ZoomText>100 %</ZoomText>
          <Slot $w={14} aria-label="تكبير"><svg width="8" height="8" viewBox="0 0 8 8" stroke="#fff" strokeWidth="2"><path d="M4 0v8M0 4h8" /></svg></Slot>
          <ZoomSlider type="range" defaultValue={50} aria-label="تكبير/تصغير" />
          <Slot $w={14} aria-label="تصغير"><svg width="6" height="2" viewBox="0 0 6 2"><path d="M0 0h6v2H0z" fill="#fff" /></svg></Slot>
          <ViewSlot aria-label="فواصل الصفحات"><svg width="14" height="13" viewBox="0 0 14 13"><path d="M.5.5h13v12H.5z" fill="none" stroke="#eee" /><path d="M1 1h4v8H1zM6 1h3v6H6z" fill="#eee" /></svg></ViewSlot>
          <ViewSlot aria-label="تخطيط الصفحة"><svg width="14" height="13" viewBox="0 0 14 13" fill="none" stroke="#eee"><path d="M.5.5h13v12H.5zM3.500 2.500h7v8h-7zM5 4.500h4M5 6.500h4M5 8.500h4" /></svg></ViewSlot>
          <ViewSlot $on aria-label="عادي"><svg width="13" height="13" viewBox="0 0 13 13" fill="none" stroke="#eee"><path d="M.5.5h12v12H.5zM4.500 0v13M8.500 0v13M0 4.500h13M0 8.500h13" /></svg></ViewSlot>
        </StatusEnd>
      </StatusBar>
      <TaskStrip>{taskGaps.map((g, i) => <TaskItem key={i} $gap={g} />)}</TaskStrip>

      <Watermark>
        <MarkName>مستقل</MarkName>
        <MarkUrl dir="ltr">mostaql.com</MarkUrl>
      </Watermark>
    </Window>
  );
}
